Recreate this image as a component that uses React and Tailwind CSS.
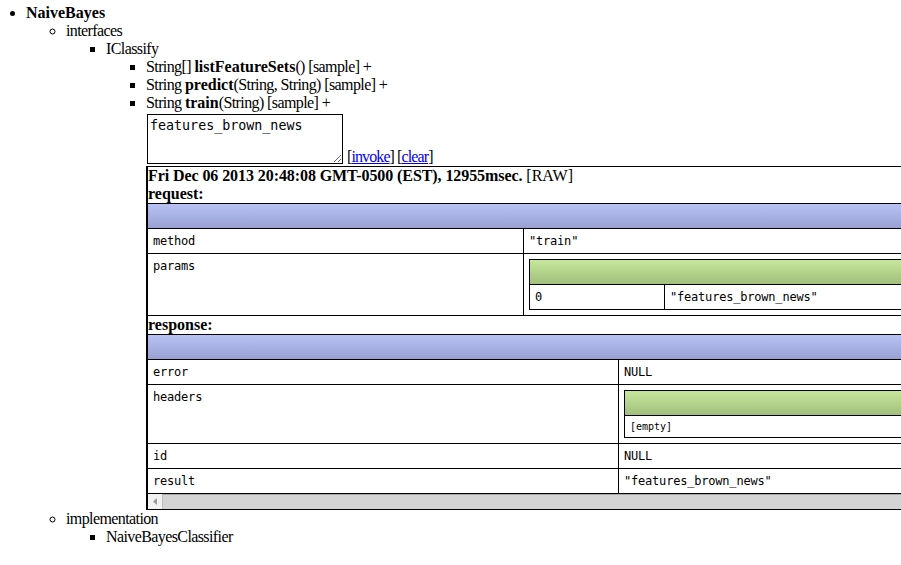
export default function App() {
  const mono = "font-['DejaVu_Sans_Mono',monospace] text-[12px] leading-[14px] tracking-[-0.2px]";
  const blue = "h-[25px] bg-linear-to-b from-[#b9c2f5] to-[#98a0d4] border-b border-black";
  const green = "h-[25px] bg-linear-to-b from-[#c6e79b] to-[#a2bf7d] border-b border-black";
  const b = "font-bold tracking-normal";
  return (
    <div className="w-[901px] min-h-[565px] overflow-hidden bg-white text-black font-['Liberation_Serif',serif] text-[16px] leading-[18px] tracking-[-0.6px]">
      <ul className="list-disc pl-[26px] pt-[4px]">
        <li>
          <b className={b}>NaiveBayes</b>
          <ul className="list-[circle] pl-[40px]">
            <li>
              interfaces
              <ul className="list-[square] pl-[40px]">
                <li>
                  IClassify
                  <ul className="list-[square] pl-[40px]">
                    <li>
                      String[] <b className={b}>listFeatureSets</b>() [sample] +
                    </li>
                    <li>
                      String <b className={b}>predict</b>(String, String) [sample] +
                    </li>
                    <li>
                      String <b className={b}>train</b>(String) [sample] +
                      <div className="flex items-end gap-[4px]">
                        <textarea
                          defaultValue="features_brown_news"
                          className="ml-[1px] mt-[2px] mb-[2px] w-[196px] h-[50px] border border-black px-[2px] pt-[3px] font-['DejaVu_Sans_Mono',monospace] text-[13.33px] leading-[16px] tracking-normal text-black bg-white resize"
                        />
                        <span className="tracking-[-0.9px]">
                          [<a href="#" className="text-[#0000ee] underline">invoke</a>] [<a href="#" className="text-[#0000ee] underline">clear</a>]
                        </span>
                      </div>
                      <div className="w-[1100px] border-t border-b border-l-2 border-black">
                        <div className="font-bold tracking-[-0.08px]">
                          Fri Dec 06 2013 20:48:08 GMT-0500 (EST), 12955msec. <span className="font-normal tracking-normal">[RAW]</span>
                        </div>
                        <div className={b}>request:</div>
                        <div className={"border-t border-black " + mono}>
                          <div className={blue}></div>
                          <div className="flex border-b border-black">
                            <div className="w-[376px] shrink-0 border-r border-black p-[5px]">method</div>
                            <div className="flex-1 p-[5px]">"train"</div>
                          </div>
                          <div className="flex border-b border-black">
                            <div className="w-[376px] shrink-0 border-r border-black p-[5px]">params</div>
                            <div className="flex-1 p-[5px]">
                              <div className="border border-black">
                                <div className={green}></div>
                                <div className="flex">
                                  <div className="w-[135px] shrink-0 border-r border-black p-[5px]">0</div>
                                  <div className="flex-1 p-[5px]">"features_brown_news"</div>
                                </div>
                              </div>
                            </div>
                          </div>
                        </div>
                        <div className={b}>response:</div>
                        <div className={"border-t border-black " + mono}>
                          <div className={blue}></div>
                          <div className="flex border-b border-black">
                            <div className="w-[471px] shrink-0 border-r border-black p-[5px]">error</div>
                            <div className="flex-1 p-[5px]">NULL</div>
                          </div>
                          <div className="flex border-b border-black">
                            <div className="w-[471px] shrink-0 border-r border-black p-[5px]">headers</div>
                            <div className="flex-1 p-[5px]">
                              <div className="border border-black">
                                <div className={green}></div>
                                <div className="p-[5px] text-[10px] leading-[11px] tracking-normal">[empty]</div>
                              </div>
                            </div>
                          </div>
                          <div className="flex border-b border-black">
                            <div className="w-[471px] shrink-0 border-r border-black p-[5px]">id</div>
                            <div className="flex-1 p-[5px]">NULL</div>
                          </div>
                          <div className="flex border-b border-black">
                            <div className="w-[471px] shrink-0 border-r border-black p-[5px]">result</div>
                            <div className="flex-1 p-[5px]">"features_brown_news"</div>
                          </div>
                          <div className="flex h-[15px] bg-[#d4d4d4]">
                            <div className="w-[15px] h-[15px] bg-[#f2f2f2] border-r border-[#bdbdbd] flex items-center justify-center">
                              <svg width="5" height="7" viewBox="0 0 5 7">
                                <path d="M4 0 L0 3.5 L4 7 Z" fill="#9a9a9a" />
                              </svg>
                            </div>
                            <div className="flex-1 border-t border-[#a8a8a8]"></div>
                          </div>
                        </div>
                      </div>
                    </li>
                  </ul>
                </li>
              </ul>
            </li>
            <li>
              implementation
              <ul className="list-[square] pl-[40px]">
                <li>NaiveBayesClassifier</li>
              </ul>
            </li>
          </ul>
        </li>
      </ul>
    </div>
  );
}
